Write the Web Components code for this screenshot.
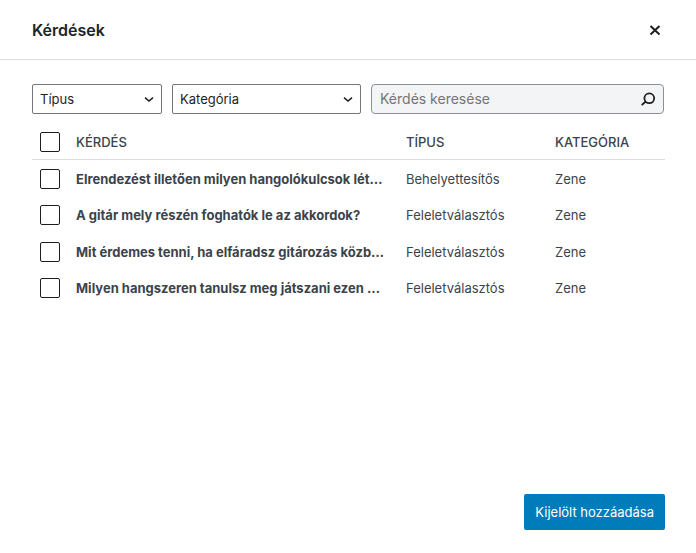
<!DOCTYPE html>
<html lang="hu">
<head>
<meta charset="utf-8">
<meta name="viewport" content="width=device-width, initial-scale=1">
<title>Kérdések</title>
<style>
  :root {
    --text: #3c434a;
    --heading: #1d2327;
    --line: #dcdcde;
    --control: #1e1e1e;
    --field-border: #8c8f94;
    --primary: #007cba;
  }
  body {
    margin: 0;
    background: #fff;
    color: var(--text);
    font: 13px/20px Inter, "Liberation Sans", sans-serif;
  }
</style>
</head>
<body>
<question-modal heading="Kérdések">
  <filter-bar slot="filters">
    <filter-select label="Típus"></filter-select>
    <filter-select label="Kategória" wide></filter-select>
    <search-field label="Kérdés keresése"></search-field>
  </filter-bar>
  <question-table></question-table>
  <primary-button slot="footer">Kijelölt hozzáadása</primary-button>
</question-modal>

<script>
const questions = [
  ['Elrendezést illetően milyen hangolókulcsok lét…', 'Behelyettesítős', 'Zene'],
  ['A gitár mely részén foghatók le az akkordok?', 'Feleletválasztós', 'Zene'],
  ['Mit érdemes tenni, ha elfáradsz gitározás közb…', 'Feleletválasztós', 'Zene'],
  ['Milyen hangszeren tanulsz meg játszani ezen …', 'Feleletválasztós', 'Zene'],
];

class QuestionModal extends HTMLElement {
  constructor() {
    super();
    this.attachShadow({ mode: 'open' });
  }

  connectedCallback() {
    const heading = this.getAttribute('heading') ?? '';
    this.shadowRoot.innerHTML = `
  <style>
  :host {
    display: flex;
    flex-direction: column;
    min-height: 100vh;
  }
  header {
    display: flex;
    align-items: center;
    justify-content: space-between;
    height: 59px;
    padding: 0 29px 0 32px;
    border-bottom: 1px solid var(--line);
  }
  h1 {
    margin: 0;
    color: var(--heading);
    font-size: 16px;
    font-weight: 600;
    line-height: 24px;
  }
  .close {
    display: flex;
    padding: 6px;
    border: 0;
    background: none;
    color: var(--control);
    cursor: pointer;
  }
  main {
    flex: 1;
    padding: 24px 31px 24px 32px;
  }
  footer {
    display: flex;
    justify-content: flex-end;
    padding: 0 31px 23px;
  }
  </style>
  <header>
    <h1>${heading}</h1>
    <button class="close" type="button" aria-label="Bezárás">
      <svg width="12" height="12" viewBox="0 0 12 12" fill="none" stroke="currentColor" stroke-width="2" aria-hidden="true">
        <path d="M1.5 2l9 8.5M10.5 2l-9 8.5"/>
      </svg>
    </button>
  </header>
  <main>
    <slot name="filters"></slot>
    <slot></slot>
  </main>
  <footer><slot name="footer"></slot></footer>
  `;
  }
}

class FilterBar extends HTMLElement {
  constructor() {
    super();
    this.attachShadow({ mode: 'open' });
  }

  connectedCallback() {
    this.shadowRoot.innerHTML = `
  <style>
  :host {
    display: flex;
    gap: 10px;
    padding-right: 1px;
  }
  ::slotted(search-field) {
    flex: 1;
  }
  </style>
  <slot></slot>
  `;
  }
}

class FilterSelect extends HTMLElement {
  constructor() {
    super();
    this.attachShadow({ mode: 'open' });
  }

  connectedCallback() {
    const label = this.getAttribute('label') ?? '';
    this.shadowRoot.innerHTML = `
  <style>
  :host {
    display: grid;
    align-items: center;
    width: 130px;
  }
  :host([wide]) {
    width: 189px;
  }
  select, svg {
    grid-area: 1 / 1;
  }
  select {
    appearance: none;
    box-sizing: border-box;
    width: 100%;
    height: 30px;
    margin: 0;
    padding: 0 24px 0 7px;
    border: 1px solid #757575;
    border-radius: 2px;
    background: #fff;
    color: var(--control);
    font: inherit;
  }
  svg {
    justify-self: end;
    margin-right: 7px;
    color: var(--control);
    pointer-events: none;
  }
  </style>
  <select aria-label="${label}"><option>${label}</option></select>
  <svg width="12" height="12" viewBox="0 0 12 12" fill="none" stroke="currentColor" stroke-width="1.5" aria-hidden="true">
    <path d="M2 4.7l4 3.3 4-3.3"/>
  </svg>
  `;
  }
}

class SearchField extends HTMLElement {
  constructor() {
    super();
    this.attachShadow({ mode: 'open' });
  }

  connectedCallback() {
    const label = this.getAttribute('label') ?? '';
    this.shadowRoot.innerHTML = `
  <style>
  :host {
    display: block;
  }
  .field {
    display: flex;
    align-items: center;
    box-sizing: border-box;
    height: 30px;
    padding: 0 7px 0 8px;
    border: 1px solid var(--field-border);
    border-radius: 4px;
    background: #f3f4f5;
  }
  input {
    appearance: none;
    flex: 1;
    min-width: 0;
    padding: 0;
    border: 0;
    outline: 0;
    background: none;
    color: var(--heading);
    font: inherit;
    font-size: 14px;
  }
  input::placeholder {
    color: #757575;
    opacity: 1;
  }
  button {
    display: flex;
    padding: 0;
    border: 0;
    background: none;
    color: var(--control);
  }
  </style>
  <div class="field">
    <input type="text" placeholder="${label}" aria-label="${label}">
    <button type="button" aria-label="Keresés">
      <svg width="16" height="16" viewBox="0 0 16 16" fill="none" stroke="currentColor" stroke-width="1.8" aria-hidden="true">
        <circle cx="9.3" cy="7.3" r="4.9"/>
        <path d="M5.7 10.5L1.7 14.2"/>
      </svg>
    </button>
  </div>
  `;
  }
}

class QuestionTable extends HTMLElement {
  constructor() {
    super();
    this.attachShadow({ mode: 'open' });
  }

  connectedCallback() {
    const rows = questions.map(([title, type, category]) => `
      <tr>
        <td class="check"><input type="checkbox" aria-label="${title}"></td>
        <td class="title">${title}</td>
        <td>${type}</td>
        <td>${category}</td>
      </tr>`).join('');

    this.shadowRoot.innerHTML = `
  <style>
  :host {
    display: block;
    margin-top: 10px;
  }
  table {
    width: 100%;
    border-collapse: separate;
    border-spacing: 0;
    table-layout: fixed;
  }
  .col-check { width: 44px; }
  .col-type { width: 149px; }
  .col-category { width: 110px; }
  th, td {
    height: 36px;
    padding: 0;
    text-align: left;
    vertical-align: middle;
    white-space: nowrap;
  }
  th {
    height: 35px;
    border-bottom: 1px solid var(--line);
    font-weight: 500;
    text-transform: uppercase;
  }
  tbody tr:nth-child(odd) td {
    height: 37px;
  }
  .check {
    padding-left: 8px;
  }
  .title {
    padding-right: 16px;
    overflow: hidden;
    font-weight: 700;
    text-overflow: ellipsis;
  }
  input {
    appearance: none;
    display: block;
    box-sizing: border-box;
    width: 20px;
    height: 20px;
    margin: 0;
    border: 1px solid var(--control);
    border-radius: 2px;
    background: #fff;
  }
  input:checked {
    background: var(--primary);
  }
  </style>
  <table>
    <colgroup>
      <col class="col-check"><col><col class="col-type"><col class="col-category">
    </colgroup>
    <thead>
      <tr>
        <th class="check"><input type="checkbox" aria-label="Összes kijelölése"></th>
        <th scope="col">Kérdés</th>
        <th scope="col">Típus</th>
        <th scope="col">Kategória</th>
      </tr>
    </thead>
    <tbody>${rows}</tbody>
  </table>
  `;
  }
}

class PrimaryButton extends HTMLElement {
  constructor() {
    super();
    this.attachShadow({ mode: 'open' });
  }

  connectedCallback() {
    this.shadowRoot.innerHTML = `
  <style>
  :host {
    display: block;
  }
  button {
    height: 36px;
    padding: 0 11px;
    border: 0;
    border-radius: 2px;
    background: var(--primary);
    color: #fff;
    font: inherit;
    cursor: pointer;
  }
  </style>
  <button type="button"><slot></slot></button>
  `;
  }
}

customElements.define('question-modal', QuestionModal);
customElements.define('filter-bar', FilterBar);
customElements.define('filter-select', FilterSelect);
customElements.define('search-field', SearchField);
customElements.define('question-table', QuestionTable);
customElements.define('primary-button', PrimaryButton);
</script>
</body>
</html>
